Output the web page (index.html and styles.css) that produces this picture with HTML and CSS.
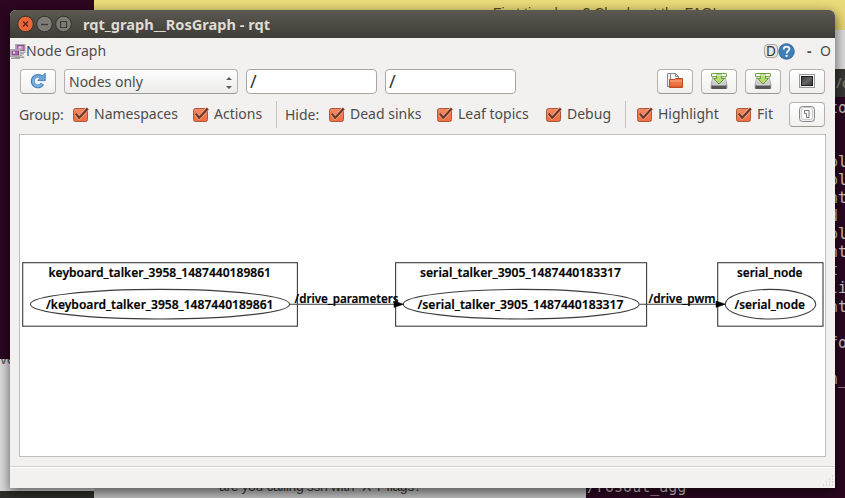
FILE: index.html
```html
<!DOCTYPE html>
<html lang="en">
<head>
<meta charset="utf-8">
<title>rqt_graph__RosGraph - rqt</title>
<link rel="stylesheet" href="styles.css">
</head>
<body>
<svg class="defs" width="0" height="0">
  <defs>
    <linearGradient id="orange" x1="0" y1="0" x2="0" y2="1"><stop offset="0" stop-color="#f58a62"/><stop offset="1" stop-color="#ee6c3e"/></linearGradient>
    <linearGradient id="metal" x1="0" y1="0" x2="0" y2="1"><stop offset="0" stop-color="#f4f4f4"/><stop offset="1" stop-color="#a9a9a9"/></linearGradient>
    <linearGradient id="screen" x1="0" y1="0" x2="1" y2="1"><stop offset="0" stop-color="#333"/><stop offset=".5" stop-color="#666"/><stop offset="1" stop-color="#333"/></linearGradient>
    <symbol id="check" viewBox="0 0 17 17">
      <rect x="1.5" y="2.5" width="14" height="13" rx="2" fill="url(#orange)" stroke="#a85a40"/>
      <path d="M4 7.8 7.2 11.8 15.8 2.3" fill="none" stroke="#f9ad90" stroke-width="3.6"/>
      <path d="M3.8 7.6 7.2 11.8 15.8 2.4" fill="none" stroke="#6b382b" stroke-width="2.2"/>
    </symbol>
    <symbol id="save" viewBox="0 0 18 18">
      <path d="M3 4h12l2 9v3.5H1V13z" fill="url(#metal)" stroke="#999" stroke-width=".7"/>
      <rect x="1.5" y="13" width="15" height="4" rx="1" fill="#555"/>
      <path d="M2.5 13h13" stroke="#ddd"/>
      <rect x="1.5" y="1.5" width="15" height="3.2" rx=".6" fill="#f1f7e7" stroke="#69a13b"/>
      <path d="M6.5 2.5h5v4h3L9 12 3.5 6.5h3z" fill="#b6dc71" stroke="#6a9b35"/>
      <path d="M3 3h12" stroke="#fff"/>
    </symbol>
  </defs>
</svg>
<div class="desktop">
  <div class="bg term-left"></div>
  <div class="bg banner"><span class="faq">First time here? Check out the FAQ!</span></div>
  <div class="bg page-left"><span class="ve">ve</span></div>
  <div class="bg dark-left"></div>
  <div class="bg page-mid"><span class="flags">are you calling ssh with -X Y flags?</span></div>
  <div class="bg page-right"></div>
  <div class="bg term">
    <div class="term-title">~/c</div>
    <pre class="term-text">to


ol
ol
nt
d
ol
nt
t
li
nt

fo

n_</pre>
    <pre class="term-low">/rosout_agg
  /rosout /statistics   /tf</pre>
  </div>

  <main class="window">
    <header class="titlebar">
      <svg width="56" height="18" viewBox="0 0 56 18">
        <circle cx="8.5" cy="9" r="7.8" fill="#ee653a" stroke="#33322e"/>
        <path d="m6 6.5 5 5m0-5-5 5" stroke="#53291c" stroke-width="1.4"/>
        <circle cx="27.5" cy="9" r="7.8" fill="#7c7b74" stroke="#33322e"/>
        <path d="M24 9.5h7" stroke="#3c3b37" stroke-width="1.3"/>
        <circle cx="46.5" cy="9" r="7.8" fill="#7c7b74" stroke="#33322e"/>
        <path d="M43.5 6.5h6v6h-6z" fill="none" stroke="#3c3b37" stroke-width="1.2"/>
      </svg>
      <h1>rqt_graph__RosGraph - rqt</h1>
    </header>

    <div class="dock">
      <svg width="16" height="17" viewBox="0 0 16 17">
        <path d="M4 12.5h8l2 2H5z" fill="#ddd" stroke="#999"/>
        <rect x="5.5" y="1.5" width="9.5" height="8" fill="#ddd" stroke="#aaa"/>
        <rect x="7" y="2.5" width="7" height="5" fill="#c48bc4" stroke="#875087"/>
        <path d="M7 10.5h7" stroke="#aaa" stroke-width="2"/>
        <rect x=".5" y="6.5" width="9.5" height="7" fill="#e5e5e5" stroke="#aaa"/>
        <rect x="2" y="8" width="6.5" height="4" fill="#b066b0" stroke="#774077"/>
        <path d="M3 9.5h2m4-5h2" stroke="#ecd5ec" stroke-width="2"/>
        <path d="M1 15.2h9" stroke="#999" stroke-width="1.5"/>
      </svg>
      <span class="dock-name">Node Graph</span>
      <span class="dkey">D</span>
      <svg class="help" width="17" height="17" viewBox="0 0 17 17">
        <circle cx="8.5" cy="8.5" r="7.7" fill="#3f7fb9" stroke="#2d659b"/>
        <path d="M5.7 6.4c0-3.6 5.7-3.6 5.7-.4 0 2-2.8 2-2.8 4.4" fill="none" stroke="#fff" stroke-width="1.7"/>
        <circle cx="8.6" cy="12.9" r="1.1" fill="#fff"/>
      </svg>
      <span class="dash">-</span><span class="oh">O</span>
    </div>

    <div class="row tools">
      <button class="btn">
        <svg width="18" height="18" viewBox="0 0 18 18">
          <path d="M13.5 11.8a5.3 5.3 0 1 1-.8-6.4" fill="none" stroke="#3b77b5" stroke-width="3.8"/>
          <path d="M16.2 1.2v7.4H8.8z" fill="#6ea6dc" stroke="#3b77b5" stroke-width=".9"/>
          <path d="M13.2 11.8a5 5 0 1 1-.8-6.2" fill="none" stroke="#78addf" stroke-width="2.4"/>
        </svg>
      </button>
      <div class="select"><span>Nodes only</span>
        <svg width="6" height="14" viewBox="0 0 6 14"><path d="M0 4 3 1l3 3zM0 10h6l-3 3z" fill="#5c5c5c"/></svg>
      </div>
      <div class="field">/</div>
      <div class="field">/</div>
      <span class="spring"></span>
      <button class="btn">
        <svg width="18" height="18" viewBox="0 0 18 18">
          <path d="M1.5 14.5v-13h5l2 2v11z" fill="#eee" stroke="#888"/>
          <path d="M4.5 10V1.5h5l3 3V10" fill="#f7f7f7" stroke="#888"/>
          <path d="M9.5 1.5v3h3" fill="none" stroke="#888"/>
          <path d="M3.5 7.5h5l1-1h7v9h-13z" fill="#ed7442" stroke="#bd4c24"/>
          <path d="M4 9h12" stroke="#f8b08d"/><path d="M4 14.3h12" stroke="#dc5423"/>
        </svg>
      </button>
      <button class="btn"><svg width="18" height="18"><use href="#save"/></svg></button>
      <button class="btn"><svg width="18" height="18"><use href="#save"/></svg></button>
      <button class="btn">
        <svg width="18" height="18" viewBox="0 0 18 18">
          <rect x="1.5" y="2.5" width="15" height="13" fill="#f2f2f2" stroke="#999"/>
          <rect x="3.5" y="4.5" width="11" height="9" fill="url(#screen)" stroke="#222"/>
        </svg>
      </button>
    </div>

    <div class="row options">
      <span class="group">Group:</span>
      <label class="w-ns"><svg width="17" height="17"><use href="#check"/></svg><span>Namespaces</span></label>
      <label class="w-ac"><svg width="17" height="17"><use href="#check"/></svg><span>Actions</span></label>
      <i class="sep"></i>
      <span class="hide">Hide:</span>
      <label class="w-ds"><svg width="17" height="17"><use href="#check"/></svg><span>Dead sinks</span></label>
      <label class="w-lt"><svg width="17" height="17"><use href="#check"/></svg><span>Leaf topics</span></label>
      <label class="w-db"><svg width="17" height="17"><use href="#check"/></svg><span>Debug</span></label>
      <i class="sep"></i>
      <label class="w-hl"><svg width="17" height="17"><use href="#check"/></svg><span>Highlight</span></label>
      <label class="w-ft"><svg width="17" height="17"><use href="#check"/></svg><span>Fit</span></label>
      <button class="btn">
        <svg width="18" height="18" viewBox="0 0 18 18">
          <rect x="1.5" y="1.5" width="15" height="15" rx="3" fill="#eee" stroke="#888"/>
          <rect x="3.5" y="2.5" width="11" height="12" rx="2" fill="#fafafa" stroke="#ccc"/>
          <path d="M6.5 5.5h4.5v7H8.5V8.5h-2z" fill="#fff" stroke="#777"/>
        </svg>
      </button>
    </div>

    <div class="canvas">
      <svg width="805" height="321" viewBox="20 135 805 321">
        <g fill="none" stroke="#3c3c3c" stroke-width="1.1">
          <rect x="22.7" y="262.7" width="274.7" height="63.5"/>
          <rect x="395.6" y="262.7" width="251" height="63.5"/>
          <rect x="717.7" y="262.7" width="105.3" height="63.5"/>
          <ellipse cx="160" cy="304.2" rx="129.6" ry="14.8"/>
          <ellipse cx="521.2" cy="304.2" rx="118" ry="14.8"/>
          <ellipse cx="770.5" cy="304.2" rx="45.3" ry="14.8"/>
          <path d="M290 304.2h105M639.5 304.2H717"/>
        </g>
        <path d="m394 301 9.5 3.2-9.5 3.2zM716 301l9.5 3.2-9.5 3.2z" fill="#000" stroke="#000" stroke-width=".5"/>
        <g class="names">
          <text x="48.5" y="277.3" textLength="222.5" lengthAdjust="spacingAndGlyphs">keyboard_talker_3958_1487440189861</text>
          <text x="46" y="309" textLength="227.5" lengthAdjust="spacingAndGlyphs">/keyboard_talker_3958_1487440189861</text>
          <text x="294.5" y="302.5" textLength="104" lengthAdjust="spacingAndGlyphs">/drive_parameters</text>
          <text x="420" y="277.3" textLength="201" lengthAdjust="spacingAndGlyphs">serial_talker_3905_1487440183317</text>
          <text x="417.5" y="309" textLength="206" lengthAdjust="spacingAndGlyphs">/serial_talker_3905_1487440183317</text>
          <text x="648.5" y="302.5" textLength="67" lengthAdjust="spacingAndGlyphs">/drive_pwm</text>
          <text x="737" y="277.3" textLength="65.5" lengthAdjust="spacingAndGlyphs">serial_node</text>
          <text x="734.5" y="309" textLength="70.5" lengthAdjust="spacingAndGlyphs">/serial_node</text>
        </g>
      </svg>
    </div>

    <footer class="status">
      <svg width="12" height="12" viewBox="0 0 12 12"><path d="M10 1h1M7 4h1m2 0h1M4 7h1m2 0h1m2 0h1M1 10h1m2 0h1m2 0h1m2 0h1" stroke="#c3c1bd" stroke-width="1.2"/></svg>
    </footer>
  </main>
</div>
</body>
</html>
```
FILE: styles.css
```css
* { box-sizing: border-box; }
body { margin: 0; font: 14px/18px "Noto Sans", "Open Sans", sans-serif; color: #4c4c4c; }
.defs { position: absolute; }
.desktop { position: relative; width: 845px; height: 498px; overflow: hidden; background: #2c001e; }
.bg { position: absolute; overflow: hidden; }
.term-left { left: 0; top: 0; width: 94px; height: 359px; background: #2c0721; }
.banner { left: 94px; top: 0; width: 751px; height: 30px; background: linear-gradient(#eadb7b, #e6d570); padding: 4px 0 0 399px; }
.faq { font: 14px/18px "Liberation Sans", sans-serif; color: #50492a; white-space: nowrap; }
.page-left { left: 0; top: 359px; width: 94px; height: 132px; background: #dcdcdc; }
.ve { display: block; margin-top: -9px; font: 14px/18px "Liberation Sans", sans-serif; color: #555; }
.dark-left { left: 0; top: 491px; width: 94px; height: 7px; background: #2d2d29; }
.page-mid { left: 94px; top: 470px; width: 492px; height: 28px; background: #c4c4c4; padding: 7px 0 0 125px; }
.flags { font: 14px/18px "Liberation Sans", sans-serif; letter-spacing: -.4px; color: #444; white-space: nowrap; }
.page-right { left: 820px; top: 30px; width: 25px; height: 39px; background: #dcdcdc; }
.term { left: 586px; top: 69px; width: 259px; height: 429px; background: #2c0720; }
.term-title { height: 28px; padding: 5px 0 0 242px; background: #373632; color: #77746b; font-weight: bold; white-space: nowrap; }
.term pre { margin: 0; font: 15px/18.05px "DejaVu Sans Mono", monospace; color: #cdc6c8; }
.term-text { padding: 2px 0 0 243px; height: 313px; }
.term .term-low { padding: 0 0 0 1px; height: 80px; margin-top: 68px; }

.window { position: absolute; left: 10px; top: 10px; width: 825px; height: 478px; display: flex; flex-direction: column; border-radius: 6px 6px 0 0; background: #f2f1f0; box-shadow: 0 4px 12px 1px rgba(0,0,0,.55); }
.titlebar { display: flex; align-items: center; gap: 10px; height: 28px; padding-left: 7px; border-radius: 6px 6px 0 0; background: linear-gradient(#5b5950, #3e3d38); }
.titlebar h1 { margin: 0; font-size: 14.6px; font-weight: 700; color: #dfdbd2; white-space: nowrap; }
.dock { display: flex; align-items: center; height: 27px; padding: 0 4px 1px 0; }
.dock > svg:first-child { margin-top: 1px; }
.dock-name { flex: 1; margin-top: -1px; font-size: 14px; }
.dkey { width: 14px; height: 14px; border: 1px solid #aaa69f; border-radius: 4px; font-size: 13.5px; line-height: 12px; text-align: center; background: #e9e6df; color: #333; }
.help { margin-left: 0; }
.dash { margin-left: 12px; width: 13px; font-weight: bold; }
.oh { width: 11px; font-size: 14px; }
.row { display: flex; align-items: center; margin: 0 10px; }
.tools { height: 33px; gap: 8px; }
.options { height: 33px; white-space: nowrap; }
.btn { display: flex; align-items: center; justify-content: center; flex: none; width: 36px; height: 25px; padding: 0 0 1px; border: 1px solid #b5b2ad; border-bottom-color: #9d9a95; border-radius: 4px; background: linear-gradient(#fff, #f0f0ef); }
.select { display: flex; align-items: center; justify-content: space-between; width: 174px; height: 25px; padding: 0 5px 0 4px; border: 1px solid #b5b2ad; border-bottom-color: #9d9a95; border-radius: 4px; background: linear-gradient(#fdfdfd, #ececeb); }
.select svg { margin-top: 3px; }
.field { width: 131px; height: 25px; padding: 2px 3px; border: 1px solid #aaa7a2; border-radius: 4px; background: #fff; color: #333; font-size: 18px; }
.spring { flex: 1; }
.group { width: 53px; margin-left: -1px; letter-spacing: -.1px; }
.hide { width: 43px; margin-left: 8px; }
.options label { display: flex; align-items: center; gap: 5px; flex: none; }
.options label span { margin-top: -2px; }
.options label svg { margin-top: -1px; }
.w-ns { width: 120px; }
.w-ac { width: 84px; }
.w-ds { width: 108px; }
.w-lt { width: 109px; }
.w-db { width: 80px; }
.w-hl { width: 99px; }
.w-ft { width: 54px; }
.sep { flex: none; width: 1px; height: 27px; background: #c4c2be; }
.sep + label { margin-left: 10px; }
.options .btn { margin-left: auto; }
.canvas { width: 807px; height: 323px; margin: 3px 0 0 9px; border: 1px solid #c1beb9; background: #fff; }
.canvas svg { display: block; }
.names { font: 600 12.8px "Noto Sans", "Open Sans", sans-serif; fill: #000; stroke: #000; stroke-width: .2px; }
.status { display: flex; justify-content: flex-end; align-items: flex-end; height: 22px; margin-top: 9px; padding: 0 1px 1px 0; border-top: 1px solid #d3d1ce; box-shadow: inset 0 1px #fff; }
```
